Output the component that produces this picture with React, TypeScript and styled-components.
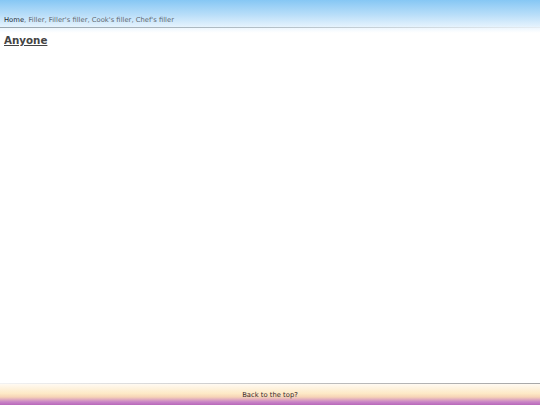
import React from "react";
import styled, { createGlobalStyle } from "styled-components";

const Global = createGlobalStyle`
  html, body { margin: 0; padding: 0; background: #fff; }
  body { font-family: "DejaVu Sans", Verdana, sans-serif; }
`;

const Page = styled.div`
  display: flex;
  flex-direction: column;
  height: 405px;
  width: 540px;
  overflow: hidden;
`;

const Header = styled.header`
  height: 27px;
  background: linear-gradient(to bottom, #86c7f4 0%, #b9def9 55%, #e6f3fd 100%);
  display: flex;
  align-items: flex-end;
  padding: 0 4px 3px;
  box-sizing: border-box;
  font-size: 6.8px;
`;

const HeaderRule = styled.div`
  height: 1px;
  background: linear-gradient(to right, #98a6b0 0%, #b4c0c8 50%, #e4ecf2 100%);
`;

const HeaderFade = styled.div`
  height: 5px;
  background: linear-gradient(to bottom, #eef7fe, #ffffff);
`;

const Crumb = styled.a<{ $home?: boolean }>`
  color: ${(p) => (p.$home ? "#1d2a36" : "#5f6870")};
  text-decoration: none;
`;

const Sep = styled.span`
  color: #5f6870;
`;

const Main = styled.main`
  flex: 1;
  padding: 0 4px;
`;

const Title = styled.h1`
  margin: 0;
  font-size: 10.3px;
  font-weight: bold;
  color: #444;
  text-decoration: underline;
  line-height: 14px;
`;

const FooterRule = styled.div`
  height: 1px;
  background: linear-gradient(to right, #f2f2f2 0%, #bdbdbd 60%, #a8a8a8 100%);
`;

const Footer = styled.footer`
  height: 21px;
  background: linear-gradient(to bottom, #fffaf2 0%, #fde9c6 45%, #f6d3b6 62%, #c984c6 85%, #b868ba 100%);
  display: flex;
  justify-content: center;
  padding-top: 7px;
  box-sizing: border-box;
  font-size: 6.8px;
  color: #3a2a2a;
`;

const crumbs = ["Filler", "Filler's filler", "Cook's filler", "Chef's filler"];

export default function App() {
  return (
    <>
      <Global />
      <Page>
        <Header>
          <div>
            <Crumb $home href="#">Home</Crumb>
            {crumbs.map((c) => (
              <React.Fragment key={c}>
                <Sep>, </Sep>
                <Crumb href="#">{c}</Crumb>
              </React.Fragment>
            ))}
          </div>
        </Header>
        <HeaderRule />
        <HeaderFade />
        <Main>
          <Title>Anyone</Title>
        </Main>
        <FooterRule />
        <Footer>Back to the top?</Footer>
      </Page>
    </>
  );
}
